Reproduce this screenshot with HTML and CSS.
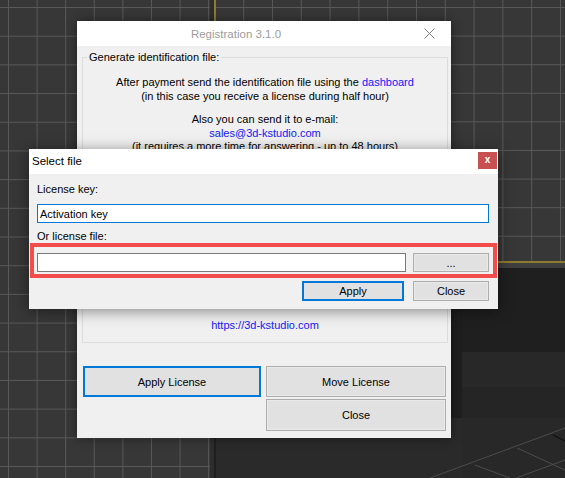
FILE: index.html
```html
<!DOCTYPE html>
<html lang="en">
<head>
    <meta charset="UTF-8">
    <title>Registration 3.1.0</title>
    <link rel="stylesheet" href="styles.css">
</head>
<body>
    <div class="scene">
        <div class="vp vp-left"></div>
        <div class="vp-divider"></div>
        <div class="vp-right">
            <div class="vp vp-top"></div>
            <div class="vp vp-persp">
                <svg width="349" height="210" viewBox="0 0 349 210">
                    <rect x="246" y="84" width="103" height="126" fill="#282828"/>
                    <rect x="0" y="150" width="246" height="60" fill="#2a2a2a"/>
                    <rect x="246" y="119" width="103" height="31" fill="#252525"/>
                    <g stroke="#4c4c4c" stroke-width="1" fill="none">
                        <line x1="214" y1="210" x2="349" y2="160"/>
                        <line x1="259" y1="197" x2="294" y2="210"/>
                        <line x1="301" y1="180" x2="349" y2="202"/>
                        <line x1="300" y1="210" x2="349" y2="192"/>
                    </g>
                    <line x1="337" y1="167" x2="349" y2="173" stroke="#080808" stroke-width="1"/>
                </svg>
            </div>
        </div>
    </div>

    <!-- main window -->
    <div class="window reg">
        <div class="titlebar">
            <span class="title">Registration 3.1.0</span>
            <span class="title-close">
                <svg width="11" height="11" viewBox="0 0 11 11">
                    <path d="M0.5 0.5 L10.5 10.5 M10.5 0.5 L0.5 10.5" stroke="#808080" stroke-width="1"/>
                </svg>
            </span>
        </div>
        <div class="reg-body">
            <fieldset class="group">
                <legend>Generate identification file:</legend>
                <p class="info">After payment send the identification file using the <a href="#">dashboard</a><br>(in this case you receive a license during half hour)</p>
                <p class="info">Also you can send it to e-mail:<br><a href="#">sales@3d-kstudio.com</a><br>(it requires a more time for answering - up to 48 hours)</p>
                <p class="info site"><a href="#">https://3d-kstudio.com</a></p>
            </fieldset>
            <div class="reg-buttons">
                <button class="btn focused">Apply License</button>
                <button class="btn">Move License</button>
                <button class="btn second-row">Close</button>
            </div>
        </div>
    </div>

    <!-- select file window -->
    <div class="window select">
        <div class="titlebar small">
            <span class="title-left">Select file</span>
            <span class="red-close">x</span>
        </div>
        <div class="select-body">
            <label class="lbl" for="key">License key:</label>
            <input class="field active" type="text" id="key" value="Activation key">
            <label class="lbl second" for="file">Or license file:</label>
            <div class="file-row">
                <input class="field plain" type="text" id="file">
                <button class="btn small-btn">...</button>
            </div>
            <div class="action-row">
                <button class="btn focused apply">Apply</button>
                <button class="btn small-btn">Close</button>
            </div>
        </div>
        <div class="highlight"></div>
    </div>
</body>
</html>
```

FILE: styles.css
```css
* {
    margin: 0;
    padding: 0;
    box-sizing: border-box;
}

body {
    width: 565px;
    height: 478px;
    overflow: hidden;
    position: relative;
    background: #2e2e2e;
    font-family: "Liberation Sans", Arial, sans-serif;
    font-size: 11px;
    color: #000;
}

/* viewports behind the windows */
.scene {
    display: grid;
    grid-template-columns: 210px 4px 1fr;
    height: 478px;
}

.vp-left {
    background-color: #373737;
    background-image:
        linear-gradient(to right, #585858 1px, transparent 1px),
        linear-gradient(to bottom, #585858 1px, transparent 1px);
    background-size: 28.6px 28.7px;
    background-position: 8px 7px;
}

.vp-divider {
    background: #2d2d2d;
}

.vp-right {
    display: flex;
    flex-direction: column;
}

.vp-top {
    height: 263px;
    border-left: 2px solid #8e7b2b;
    border-bottom: 2px solid #8e7b2b;
    background-color: #373737;
    background-image:
        linear-gradient(to right, #585858 1px, transparent 1px),
        linear-gradient(to bottom, #585858 1px, transparent 1px);
    background-size: 28.8px 28.6px;
    background-position: 27.2px 7px;
}

.vp-persp {
    flex: 1;
    border-top: 5px solid #3f3f3f;
    padding-left: 2px;
    background: #1f1f1f;
}

.vp-persp svg {
    display: block;
}

/* windows */
.window {
    position: absolute;
    background: #f0f0f0;
    display: flex;
    flex-direction: column;
}

.reg {
    left: 77px;
    top: 21px;
    width: 374px;
    height: 417px;
    box-shadow: 0 0 10px rgba(0, 0, 0, 0.45);
}

.select {
    left: 29px;
    top: 149px;
    width: 469px;
    height: 160px;
    box-shadow: 0 2px 14px rgba(0, 0, 0, 0.45);
}

.titlebar {
    height: 25px;
    background: #fff;
    display: flex;
    align-items: center;
}

.title {
    flex: 1;
    text-align: center;
    padding-right: 10px;
    font-size: 11.5px;
    color: #9c9c9c;
}

.title-close {
    width: 46px;
    display: flex;
    justify-content: center;
    padding-left: 2px;
}

.title-close svg {
    display: block;
}

.reg-body {
    flex: 1;
    padding: 0 3px 0 5px;
}

.group {
    margin-top: 4px;
    border: 1px solid #dcdcdc;
    padding: 0 0 10px;
    width: 366px;
}

.group legend {
    margin-left: 4px;
    padding: 0 2px;
    line-height: 14px;
}

.info {
    text-align: center;
    line-height: 13.5px;
    margin-top: 10px;
}

.group legend + .info {
    margin-top: 12px;
}

.info a {
    color: #1515ff;
    text-decoration: none;
}

.info.site {
    margin-top: 165px;
}

.reg-buttons {
    margin: 23px 0 0 1px;
    display: grid;
    grid-template-columns: 178px 180px;
    grid-template-rows: 31px 32px;
    column-gap: 5px;
    row-gap: 2px;
}

.btn {
    font-family: "Liberation Sans", Arial, sans-serif;
    font-size: 11px;
    color: #000;
    background: #e1e1e1;
    border: 1px solid #adadad;
    box-shadow: inset 0 0 0 1px #e9e9e9;
}

.btn.focused {
    border: 2px solid #0078d7;
    box-shadow: none;
}

.second-row {
    grid-column: 2;
}

/* select file dialog */
.titlebar.small {
    height: 25px;
    align-items: flex-start;
    justify-content: space-between;
}

.title-left {
    margin: 5px 0 0 3px;
    font-size: 11.5px;
    line-height: 14px;
}

.red-close {
    margin: 3px 1px 0 0;
    width: 19px;
    height: 17px;
    background: #c75050;
    color: #fff;
    font-weight: bold;
    font-size: 10px;
    line-height: 15px;
    text-align: center;
}

.select-body {
    flex: 1;
    padding: 0 9px 0 8px;
    display: flex;
    flex-direction: column;
}

.lbl {
    margin-top: 9px;
    line-height: 13px;
}

.lbl.second {
    margin-top: 7px;
}

.field {
    height: 19px;
    background: #fff;
    font-family: "Liberation Sans", Arial, sans-serif;
    font-size: 11px;
    padding: 0 2px;
    outline: none;
}

.field.active {
    margin-top: 8px;
    border: 1px solid #0078d7;
}

.field.plain {
    border: 1px solid #7a7a7a;
    width: 369px;
}

.file-row {
    margin-top: 10px;
    display: flex;
    gap: 7px;
    height: 19px;
}

.small-btn {
    width: 76px;
}

.action-row {
    margin-top: 9px;
    height: 20px;
    display: flex;
    justify-content: flex-end;
    gap: 9px;
}

.apply {
    width: 102px;
}

.highlight {
    position: absolute;
    left: 1px;
    top: 94px;
    width: 467px;
    height: 35px;
    border: 4px solid #f44b4b;
}
```
